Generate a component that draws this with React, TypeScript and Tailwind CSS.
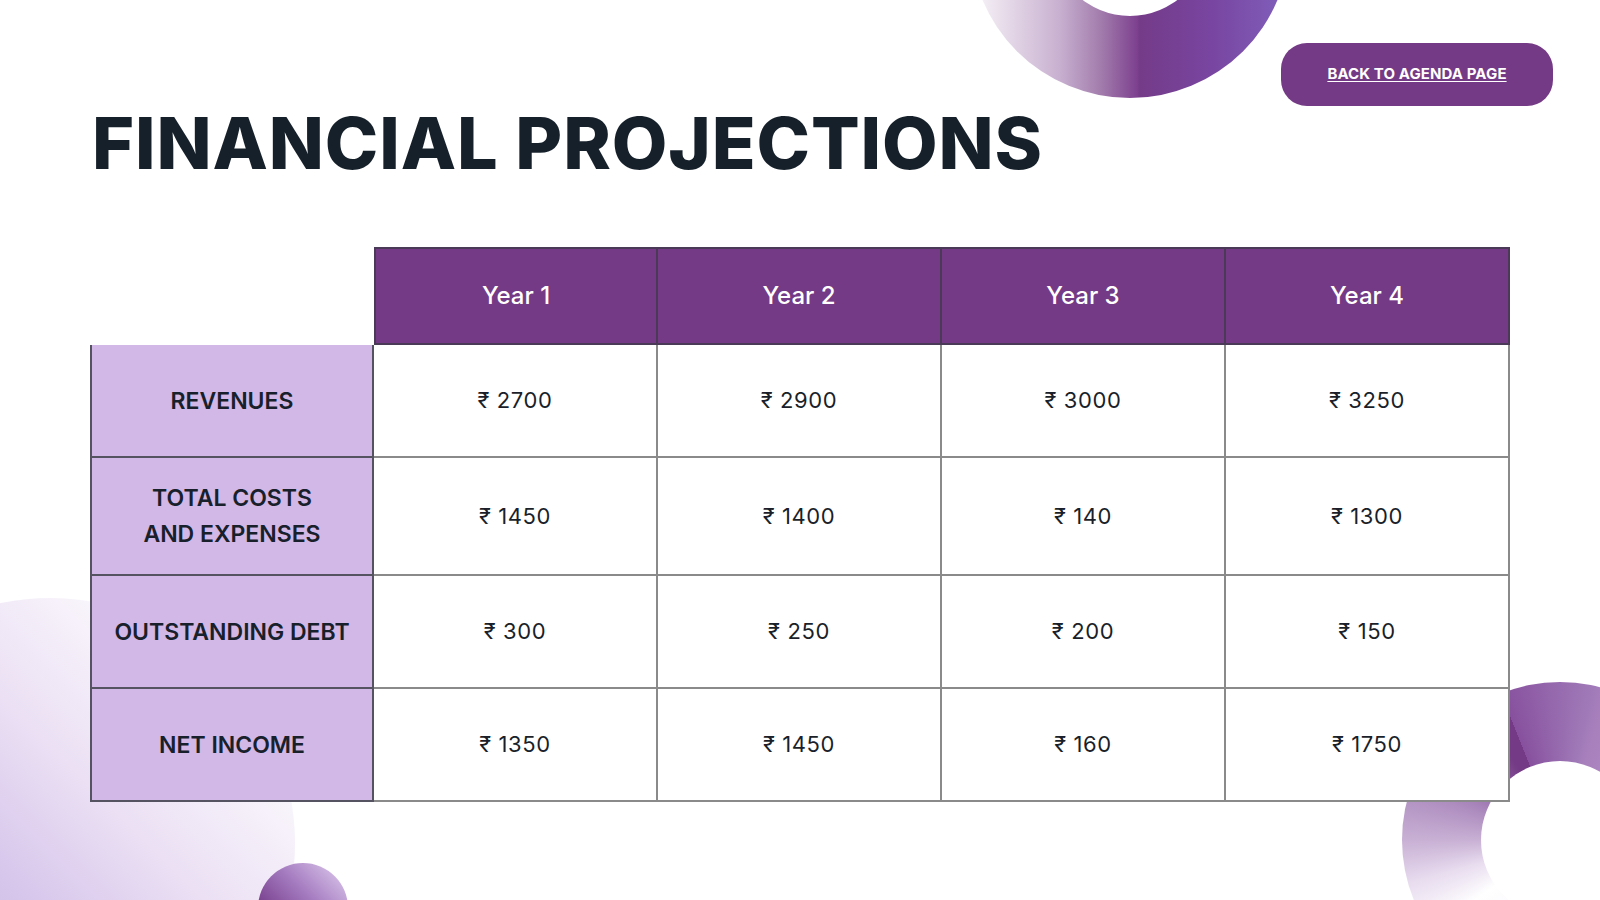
import React from "react";

const years = ["Year 1", "Year 2", "Year 3", "Year 4"];
const rows: { label: string[]; values: string[]; h: string }[] = [
  { label: ["REVENUES"], values: ["2700", "2900", "3000", "3250"], h: "h-[113px]" },
  { label: ["TOTAL COSTS", "AND EXPENSES"], values: ["1450", "1400", "140", "1300"], h: "h-[118px]" },
  { label: ["OUTSTANDING DEBT"], values: ["300", "250", "200", "150"], h: "h-[113px]" },
  { label: ["NET INCOME"], values: ["1350", "1450", "160", "1750"], h: "h-[113px]" },
];

export default function App() {
  return (
    <div className="relative w-[1600px] h-[900px] overflow-hidden bg-white [font-family:Inter,'Noto_Sans',sans-serif]">
      {/* decorations */}
      <div className="absolute left-[970px] top-[-222px] w-[320px] h-[320px] rounded-full bg-[linear-gradient(90deg,#fbf8fb_0%,#f3edf4_4%,#c8b0d0_28%,#a27cac_41%,#7e4290_52%,#743b88_53%,#7845a0_75%,#7f5cb8_96%,#8060bb_100%)]" />
      <div className="absolute left-[1052px] top-[-140px] w-[156px] h-[156px] rounded-full bg-white" />

      <div className="absolute left-[-195px] top-[598px] w-[490px] h-[490px] rounded-full bg-[linear-gradient(45deg,#bea2da_10%,#d8c8ec_43%,#ebe0f4_60%,#f8f4fb_78%,#ffffff_95%)]" />
      <div className="absolute left-[258px] top-[863px] w-[90px] h-[90px] rounded-full bg-[linear-gradient(45deg,#6e3282_20%,#a57cc0_60%,#d4bde6_90%)]" />

      <div className="absolute left-[1402px] top-[682px] w-[316px] h-[316px] rounded-full bg-[conic-gradient(from_338deg,#87509e_0deg,#a07ab8_34deg,#a880bc_40deg,#c0a4d4_112deg,#f4eef8_200deg,#ffffff_257deg,#e8dcef_276deg,#c8b0d4_292deg,#a07ab4_320deg,#743a85_352deg,#743a85_360deg)]" />
      <div className="absolute left-[1481px] top-[761px] w-[158px] h-[158px] rounded-full bg-white" />

      {/* content */}
      <div className="relative z-10 flex flex-col pt-[43px] pl-[90px]">
        <div className="flex justify-end pr-[47px]">
          <div className="w-[272px] h-[63px] rounded-[26px] bg-[#743a85] flex items-center justify-center">
            <span className="text-white text-[15px] font-bold underline underline-offset-2 tracking-[0.1px]">
              BACK TO AGENDA PAGE
            </span>
          </div>
        </div>

        <h1 className="mt-[1px] text-[72px] leading-[72px] font-extrabold text-[#16202a] tracking-[0.9px] pl-[2px]">
          FINANCIAL PROJECTIONS
        </h1>

        <div className="mt-[68px] w-[1420px] grid grid-cols-[284px_284px_284px_284px_284px]">
          <div className="h-[98px]" />
          {years.map((y, i) => (
            <div
              key={y}
              className={`h-[98px] bg-[#743a85] border-t-2 border-b-2 border-r-2 border-[#4a3a58] ${i === 0 ? "border-l-2" : ""} flex items-center justify-center text-white text-[24px] font-medium`}
            >
              {y}
            </div>
          ))}
          {rows.map((r) => (
            <React.Fragment key={r.label.join(" ")}>
              <div
                className={`${r.h} bg-[#d1b8e6] border-l-2 border-r-2 border-b-2 border-[#555262] flex flex-col items-center justify-center text-[#18202b] text-[23px] font-semibold leading-[36px] text-center`}
              >
                {r.label.map((l) => (
                  <span key={l}>{l}</span>
                ))}
              </div>
              {r.values.map((v, j) => (
                <div
                  key={j}
                  className={`${r.h} bg-white border-r-2 border-b-2 border-[#8a8a8a] flex items-center justify-center text-[#1a1f2a] text-[22px] font-normal tracking-[0.6px]`}
                >
                  ₹ {v}
                </div>
              ))}
            </React.Fragment>
          ))}
        </div>
      </div>
    </div>
  );
}
